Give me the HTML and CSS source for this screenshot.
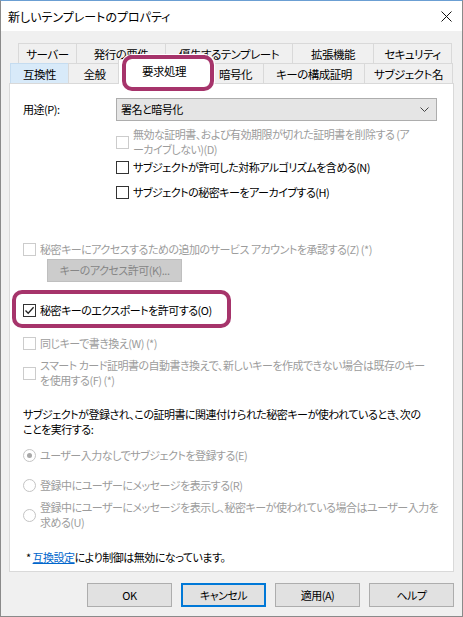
FILE: index.html
```html
<!DOCTYPE html>
<html lang="ja">
<head>
  <meta charset="UTF-8" />
  <meta name="viewport" content="width=device-width, initial-scale=1.0"/>
  <title>新しいテンプレートのプロパティ</title>
  <link rel="stylesheet" href="styles.css">
</head>
<body>
  <div class="window">
    <div class="titlebar">
      <span class="title">新しいテンプレートのプロパティ</span>
      <span class="close">
        <svg width="11" height="11" viewBox="0 0 11 11"><path d="M0.5 0.5 L10.5 10.5 M10.5 0.5 L0.5 10.5" stroke="#111" stroke-width="1" fill="none"/></svg>
      </span>
    </div>

    <div class="content">
      <div class="tabs">
        <div class="tab-row back">
          <div class="tab w59">サーバー</div>
          <div class="tab w90">発行の要件</div>
          <div class="tab w128">優先するテンプレート</div>
          <div class="tab w82">拡張機能</div>
          <div class="tab w79">セキュリティ</div>
        </div>
        <div class="tab-row front">
          <div class="tab w59 hover">互換性</div>
          <div class="tab w53">全般</div>
          <div class="tab selected">要求処理</div>
          <div class="tab w57 after-selected">暗号化</div>
          <div class="tab w102">キーの構成証明</div>
          <div class="tab w89">サブジェクト名</div>
        </div>
      </div>

      <div class="panel">
        <div class="purpose">
          <label class="purpose-label">用途(P):</label>
          <div class="select">
            <span>署名と暗号化</span>
            <svg width="9" height="5" viewBox="0 0 9 5"><path d="M0.5 0.5 L4.5 4.5 L8.5 0.5" stroke="#444" stroke-width="1" fill="none"/></svg>
          </div>

          <div class="check disabled opt-d">
            <span class="box"></span>
            <span>無効な証明書、および有効期限が切れた証明書を削除する (ア<br>ーカイブしない)(D)</span>
          </div>
          <div class="check opt-n">
            <span class="box"></span>
            <span>サブジェクトが許可した対称アルゴリズムを含める(N)</span>
          </div>
          <div class="check opt-h">
            <span class="box"></span>
            <span>サブジェクトの秘密キーをアーカイブする(H)</span>
          </div>
        </div>

        <div class="check disabled opt-z">
          <span class="box"></span>
          <span>秘密キーにアクセスするための追加のサービス アカウントを承認する(Z) (*)</span>
        </div>
        <button class="btn-disabled">キーのアクセス許可(K)...</button>

        <div class="check opt-o">
          <span class="box checked">
            <svg width="11" height="11" viewBox="0 0 11 11"><path d="M1.5 5.5 L4.2 8.3 L9.6 2.2" stroke="#222" stroke-width="1.3" fill="none"/></svg>
          </span>
          <span>秘密キーのエクスポートを許可する(O)</span>
        </div>
        <div class="check disabled opt-w">
          <span class="box"></span>
          <span>同じキーで書き換え(W) (*)</span>
        </div>
        <div class="check disabled opt-f">
          <span class="box"></span>
          <span>スマート カード証明書の自動書き換えで、新しいキーを作成できない場合は既存のキー<br>を使用する(F) (*)</span>
        </div>

        <p class="note">サブジェクトが登録され、この証明書に関連付けられた秘密キーが使われているとき、次の<br>ことを実行する:</p>

        <div class="radio disabled opt-e">
          <span class="dot on"></span>
          <span>ユーザー入力なしでサブジェクトを登録する(E)</span>
        </div>
        <div class="radio disabled opt-r">
          <span class="dot"></span>
          <span>登録中にユーザーにメッセージを表示する(R)</span>
        </div>
        <div class="radio disabled opt-u">
          <span class="dot"></span>
          <span>登録中にユーザーにメッセージを表示し、秘密キーが使われている場合はユーザー入力を<br>求める(U)</span>
        </div>

        <p class="footnote">* <a href="#">互換設定</a>により制御は無効になっています。</p>
      </div>

      <div class="footer">
        <button class="btn">OK</button>
        <button class="btn default">キャンセル</button>
        <button class="btn">適用(A)</button>
        <button class="btn">ヘルプ</button>
      </div>
    </div>

    <div class="ring ring-tab"></div>
    <div class="ring ring-export"></div>
  </div>
</body>
</html>
```

FILE: styles.css
```css
* {
  box-sizing: border-box;
}
body {
  margin: 0;
  background: #fff;
  font-family: "Noto Sans CJK JP", "Noto Sans", sans-serif;
  font-size: 11px;
  line-height: 15px;
  letter-spacing: -0.5px;
  color: #000;
  font-feature-settings: "palt";
  white-space: nowrap;
}
.window {
  position: relative;
  width: 463px;
  height: 617px;
  border: 1px solid #8a8a8a;
  border-top-color: #6b9fd3;
  background: #f0f0f0;
  overflow: hidden;
}
.titlebar {
  height: 30px;
  background: #fff;
  display: flex;
  align-items: center;
  justify-content: space-between;
  padding: 1px 8px 0 7px;
}
.title {
  font-size: 12px;
  letter-spacing: 0;
}
.close {
  display: flex;
  margin-right: 2px;
}

.content {
  padding: 12px 8px 0 8px;
}

/* tabs */
.tab-row {
  display: flex;
  height: 20px;
}
.tab-row.back {
  margin-left: 9px;
}
.tab-row.front {
  margin-left: 1px;
}
.tab {
  height: 20px;
  border: 1px solid #d9d9d9;
  border-bottom: none;
  background: #f0f0f0;
  display: flex;
  align-items: center;
  justify-content: center;
  margin-left: -1px;
  padding-top: 1px;
  font-size: 11.5px;
}
.tab:first-child {
  margin-left: 0;
}
.tab.hover {
  background: #d8eaf9;
  border-color: #c5dcf0;
}
.tab.selected {
  position: relative;
  z-index: 2;
  width: 92px;
  height: 25px;
  margin: -4px 0 -1px -3px;
  background: #fff;
  padding-top: 0;
  padding-bottom: 2px;
}
.tab.after-selected {
  margin-left: -3px;
}
.w53 { width: 53px; }
.w57 { width: 57px; }
.w59 { width: 59px; }
.w79 { width: 79px; }
.w82 { width: 82px; }
.w89 { width: 89px; }
.w90 { width: 90px; }
.w102 { width: 102px; }
.w128 { width: 128px; }

/* panel */
.panel {
  height: 489px;
  background: #fff;
  border: 1px solid #d9d9d9;
  padding: 14px 15px 0 13px;
}
.purpose {
  display: grid;
  grid-template-columns: 93px 321px;
}
.purpose > .check {
  grid-column: 2;
}
.purpose-label {
  align-self: center;
}
.select {
  height: 23px;
  background: #e5e5e5;
  border: 1px solid #adadad;
  display: flex;
  align-items: center;
  justify-content: space-between;
  padding: 0 7px 0 4px;
}

.check,
.radio {
  display: flex;
  align-items: center;
  gap: 4px;
}
.box {
  flex: none;
  width: 13px;
  height: 13px;
  border: 1px solid #333;
  background: #fff;
  display: flex;
  align-items: center;
  justify-content: center;
}
.disabled {
  color: #9c9c9c;
}
.disabled .box {
  border-color: #cccccc;
}
.dot {
  flex: none;
  width: 13px;
  height: 13px;
  border-radius: 50%;
  border: 1px solid #c4c4c4;
  background: #fff;
  display: flex;
  align-items: center;
  justify-content: center;
}
.dot.on::after {
  content: "";
  width: 5px;
  height: 5px;
  border-radius: 50%;
  background: #a8a8a8;
}

.opt-d { margin-top: 6px; }
.opt-n { margin-top: 3px; }
.opt-h { margin-top: 10px; }
.opt-z { margin-top: 42px; }
.opt-o { margin-top: 21px; }
.opt-w { margin-top: 18px; }
.opt-f { margin-top: 7px; }
.opt-e { margin-top: 11px; }
.opt-r { margin-top: 15px; }
.opt-u { margin-top: 7px; }

.btn-disabled {
  display: block;
  margin: 2px 0 0 24px;
  width: 135px;
  height: 23px;
  font: inherit;
  letter-spacing: inherit;
  font-feature-settings: "palt";
  color: #868686;
  background: #cccccc;
  border: 1px solid #bfbfbf;
  padding: 0;
}

.note {
  margin: 19px 0 0;
}
.footnote {
  margin: 20px 0 0;
  padding-left: 3px;
}
.footnote a {
  color: #0066cc;
  text-decoration: underline;
}

/* dialog buttons */
.footer {
  display: flex;
  justify-content: flex-end;
  gap: 9px;
  margin-top: 11px;
}
.btn {
  width: 85px;
  height: 24px;
  font: inherit;
  letter-spacing: inherit;
  font-feature-settings: "palt";
  background: #e1e1e1;
  border: 1px solid #adadad;
  padding: 0;
  color: #000;
}
.btn.default {
  border: 2px solid #0078d7;
}

/* callout rings */
.ring {
  position: absolute;
  border: 4px solid #a6346b;
  border-radius: 10px;
  box-shadow: 0 0 0 1px #fff, inset 0 0 0 1px #fff;
  z-index: 5;
}
.ring-tab {
  left: 121px;
  top: 54px;
  width: 92px;
  height: 36px;
}
.ring-export {
  left: 11px;
  top: 289px;
  width: 219px;
  height: 38px;
}
```
